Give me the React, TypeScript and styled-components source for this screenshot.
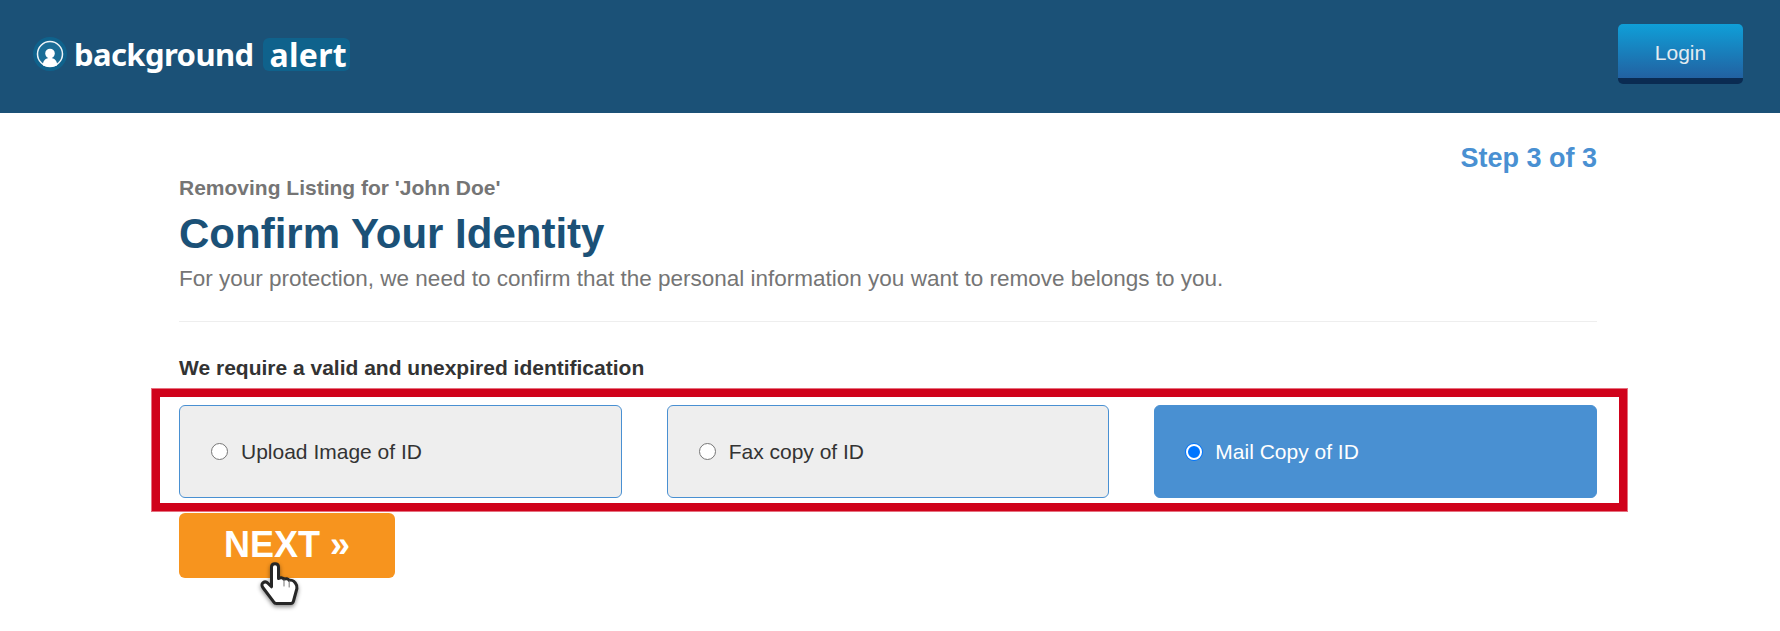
import React from 'react';
import styled, { createGlobalStyle } from 'styled-components';

const GlobalStyle = createGlobalStyle`
  html, body {
    margin: 0;
    padding: 0;
    background: #fff;
    font-family: 'Liberation Sans', Arial, sans-serif;
  }
`;

const options = [
  { label: 'Upload Image of ID', selected: false },
  { label: 'Fax copy of ID', selected: false },
  { label: 'Mail Copy of ID', selected: true },
];

const App = () => {
  return (
    <Page>
      <GlobalStyle />
      <Header>
        <Logo>
          <LogoMark viewBox="0 0 34 34">
            <circle cx="17" cy="17" r="17" fill="#0f628c" />
            <circle cx="17" cy="17" r="12.500" fill="#1b6d96" stroke="#eef4f7" strokeWidth="1.500" />
            <circle cx="17" cy="16.500" r="4.800" fill="#fff" />
            <path d="M10 28.500c-.4-5 2.500-7.500 7-7.500s7.400 2.500 7 7.500c-2.200 1-4.700 1.300-7 1.300s-4.800-.3-7-1.300z" fill="#fff" />
          </LogoMark>
          <LogoWord>background</LogoWord>
          <LogoPill>alert</LogoPill>
        </Logo>
        <LoginButton>Login</LoginButton>
      </Header>

      <Main>
        <Step>Step 3 of 3</Step>
        <Removing>Removing Listing for 'John Doe'</Removing>
        <Title>Confirm Your Identity</Title>
        <Subtitle>For your protection, we need to confirm that the personal information you want to remove belongs to you.</Subtitle>
        <Divider />
        <Requirement>We require a valid and unexpired identification</Requirement>
        <OptionsWrap>
          <Highlight />
          <Options>
            {options.map(option => (
              <OptionCard key={option.label} $selected={option.selected}>
                <Radio $selected={option.selected} />
                {option.label}
              </OptionCard>
            ))}
          </Options>
        </OptionsWrap>
        <NextWrap>
          <NextButton>NEXT »</NextButton>
          <Cursor viewBox="0 0 40 46">
            <path
              d="M11.500 5c0-2 1.500-3.300 3.500-3.300S18.500 3 18.500 5v11.500c1.500-1.200 4.500-1.200 5.500.8 1.500-1 4.500-.8 5.200 1.200 1.800-.8 4.500.2 6 2.300 1.500 1.900 2 3.700 1.700 5.700l-3.400 12.500c-.3 1.500-1.300 2.500-2.800 2.500H16.500c-1.300 0-2.300-.6-3-1.800L3.200 26c-1.700-2.200-1.600-4.300-.2-5.300 1.700-1.200 3.800-.7 5.200.8l3.300 3.300z"
              fill="#fff"
              stroke="#262626"
              strokeWidth="3"
              strokeLinejoin="round"
            />
            <path d="M24 18v6M29.200 19v6" fill="none" stroke="#8a8a8a" strokeWidth="1.200" strokeLinecap="round" />
          </Cursor>
        </NextWrap>
      </Main>
    </Page>
  );
};

export default App;

const Page = styled.div`
  width: 1780px;
  height: 631px;
  overflow: hidden;
  background: #fff;
`;

const Header = styled.header`
  height: 113px;
  box-sizing: border-box;
  background: #1b5177;
  display: flex;
  align-items: center;
  justify-content: space-between;
  padding: 0 37px 5px 33px;
`;

const Logo = styled.div`
  display: flex;
  align-items: center;
`;

const LogoMark = styled.svg`
  width: 34px;
  height: 34px;
  margin-right: 7px;
`;

const LogoWord = styled.span`
  font-family: 'Noto Sans', sans-serif;
  font-weight: 700;
  font-size: 31px;
  line-height: 34px;
  color: #fff;
  letter-spacing: -0.6px;
`;

const LogoPill = styled.span`
  font-family: 'Noto Sans', sans-serif;
  font-weight: 700;
  font-size: 32px;
  line-height: 33px;
  letter-spacing: 0.3px;
  color: #fff;
  background: #0f628c;
  border-radius: 6px;
  padding: 0 3px 0 6px;
  margin-left: 10px;
`;

const LoginButton = styled.button`
  width: 125px;
  height: 60px;
  border: 0;
  border-bottom: 6px solid #0a2b52;
  border-radius: 5px;
  background: linear-gradient(#0f9fd8, #2261a1);
  color: #e3ebf1;
  font-family: 'Liberation Sans', Arial, sans-serif;
  font-size: 21px;
  padding: 3px 0 0;
`;

const Main = styled.main`
  width: 1418px;
  margin-left: 179px;
  padding-top: 31px;
`;

const Step = styled.div`
  text-align: right;
  font-size: 27px;
  font-weight: 700;
  line-height: 29px;
  color: #4990d2;
`;

const Removing = styled.div`
  margin-top: 4px;
  font-size: 21px;
  font-weight: 700;
  line-height: 22px;
  color: #757575;
`;

const Title = styled.h1`
  margin: 11px 0 0;
  font-size: 42px;
  font-weight: 700;
  line-height: 48px;
  color: #1b5177;
`;

const Subtitle = styled.p`
  margin: 8px 0 0;
  font-size: 22.5px;
  line-height: 26px;
  color: #757575;
`;

const Divider = styled.hr`
  margin: 29px 0 0;
  border: 0;
  border-top: 1px solid #eee;
`;

const Requirement = styled.div`
  margin-top: 34px;
  font-size: 21px;
  font-weight: 700;
  line-height: 23px;
  color: #333;
`;

const OptionsWrap = styled.div`
  position: relative;
  margin-top: 26px;
`;

/* Annotation frame drawn over the options */
const Highlight = styled.div`
  position: absolute;
  top: -17px;
  left: -28px;
  right: -31px;
  bottom: -14px;
  border: 9px solid #d0021b;
  outline: 1px solid #e6707f;
  outline-offset: -1px;
  pointer-events: none;
`;

const Options = styled.div`
  display: grid;
  grid-template-columns: repeat(3, 1fr);
  column-gap: 45px;
`;

const OptionCard = styled.label<{ $selected: boolean }>`
  height: 93px;
  box-sizing: border-box;
  display: flex;
  align-items: center;
  padding-left: 31px;
  border: 1px solid #4990d2;
  border-radius: 6px;
  background: ${props => (props.$selected ? '#4990d2' : '#eee')};
  color: ${props => (props.$selected ? '#fff' : '#333')};
  font-size: 21px;
`;

const Radio = styled.span<{ $selected: boolean }>`
  width: ${props => (props.$selected ? '16px' : '17px')};
  height: ${props => (props.$selected ? '16px' : '17px')};
  box-sizing: border-box;
  border-radius: 50%;
  margin-right: 13px;
  background: ${props => (props.$selected ? '#0075ff' : '#fff')};
  border: ${props => (props.$selected ? '2px solid #fff' : '1px solid #767676')};
  box-shadow: ${props => (props.$selected ? '0 0 0 1px #0075ff' : 'none')};
`;

const NextWrap = styled.div`
  position: relative;
  width: 216px;
  margin-top: 15px;
`;

const NextButton = styled.button`
  display: block;
  width: 216px;
  height: 65px;
  border: 0;
  border-radius: 6px;
  background: #f7941e;
  color: #fff;
  font-family: 'Liberation Sans', Arial, sans-serif;
  font-size: 36px;
  font-weight: 700;
  padding: 0 0 2px;
`;

const Cursor = styled.svg`
  position: absolute;
  left: 81px;
  top: 49px;
  width: 40px;
  height: 46px;
  filter: blur(0.4px) drop-shadow(0 2px 2px rgba(0, 0, 0, 0.45));
`;
